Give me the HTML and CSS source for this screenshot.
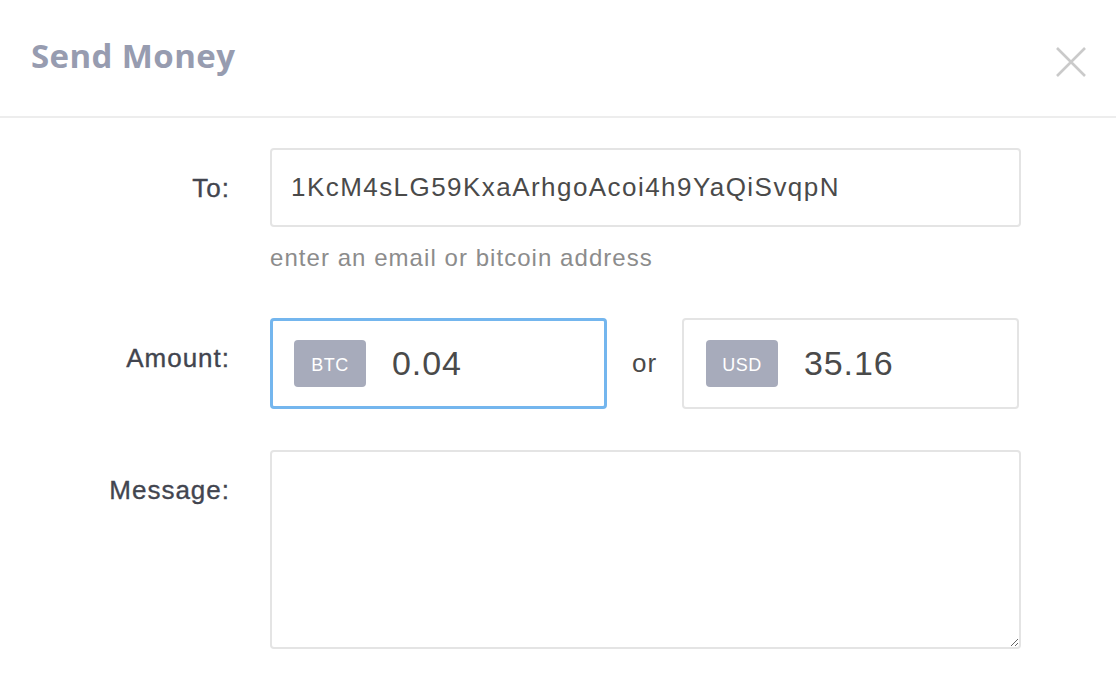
FILE: index.html
```html
<!DOCTYPE html>
<html>
<head>
<meta charset="utf-8">
<link rel="stylesheet" href="styles.css">
</head>
<body>
<div class="modal">
  <div class="modal-header">
    <h1 class="title">Send Money</h1>
    <svg class="close" width="30" height="30" viewBox="0 0 30 30"><path d="M1 1 L29 29 M29 1 L1 29" stroke="#cacaca" stroke-width="2.6" fill="none"/></svg>
  </div>
  <div class="form">
    <div class="row row-to">
      <label class="label">To:</label>
      <div class="field">
        <div class="input">1KcM4sLG59KxaArhgoAcoi4h9YaQiSvqpN</div>
        <div class="hint">enter an email or bitcoin address</div>
      </div>
    </div>
    <div class="row row-amount">
      <label class="label">Amount:</label>
      <div class="amounts">
        <div class="amount focused"><span class="badge">BTC</span><span class="value">0.04</span></div>
        <div class="or">or</div>
        <div class="amount"><span class="badge">USD</span><span class="value">35.16</span></div>
      </div>
    </div>
    <div class="row row-message">
      <label class="label">Message:</label>
      <textarea class="message"></textarea>
    </div>
  </div>
</div>
</body>
</html>
```

FILE: styles.css
```css
html, body {
  margin: 0;
  padding: 0;
  background: #ffffff;
}
body {
  width: 1116px;
  height: 688px;
  overflow: hidden;
  font-family: "Liberation Sans", Arial, sans-serif;
}
.modal-header {
  box-sizing: border-box;
  height: 118px;
  border-bottom: 2px solid #ededed;
  display: flex;
  align-items: flex-start;
  padding: 40px 30px 0 31px;
}
.title {
  margin: 0;
  font-family: "Open Sans", sans-serif;
  font-weight: 700;
  font-size: 33px;
  line-height: 32px;
  letter-spacing: 0.4px;
  color: #979cb0;
}
.close {
  margin-left: auto;
  margin-top: 7px;
}
.form {
  padding: 30px 95px 0 0;
}
.row {
  display: grid;
  grid-template-columns: 230px 1fr;
  column-gap: 40px;
}
.row-to { margin-bottom: 45px; }
.row-amount { margin-bottom: 41px; }
.label {
  text-align: right;
  font-size: 26px;
  line-height: 30px;
  letter-spacing: 1px;
  color: #42454f;
  -webkit-text-stroke: 0.35px #42454f;
  padding-top: 25px;
}
.input {
  box-sizing: border-box;
  height: 79px;
  border: 2px solid #e4e4e4;
  border-radius: 4px;
  padding-left: 19px;
  display: flex;
  align-items: center;
  font-size: 26px;
  letter-spacing: 1.45px;
  color: #4a4a4a;
}
.hint {
  margin-top: 16px;
  font-size: 24px;
  line-height: 30px;
  letter-spacing: 1.05px;
  color: #8c8c8c;
}
.amounts {
  display: flex;
  align-items: stretch;
}
.amount {
  box-sizing: border-box;
  width: 337px;
  height: 91px;
  border: 2px solid #e4e4e4;
  border-radius: 4px;
  padding-left: 22px;
  display: flex;
  align-items: center;
}
.amount.focused {
  border: 3px solid #74b6ee;
  padding-left: 21px;
}
.or {
  width: 75px;
  text-align: center;
  align-self: center;
  font-size: 26px;
  letter-spacing: 1px;
  color: #4a4a4a;
}
.badge {
  box-sizing: border-box;
  width: 72px;
  height: 47px;
  border-radius: 4px;
  background: #a7abbb;
  color: #ffffff;
  font-size: 18px;
  padding-top: 3px;
  display: flex;
  align-items: center;
  justify-content: center;
  letter-spacing: 0.5px;
}
.value {
  margin-left: 26px;
  font-size: 34px;
  letter-spacing: 0.9px;
  color: #4a4a4a;
}
.message {
  box-sizing: border-box;
  display: block;
  width: 751px;
  height: 199px;
  border: 2px solid #e4e4e4;
  border-radius: 4px;
  margin: 0;
  padding: 10px;
  outline: none;
  font-family: "Liberation Sans", Arial, sans-serif;
}
```
